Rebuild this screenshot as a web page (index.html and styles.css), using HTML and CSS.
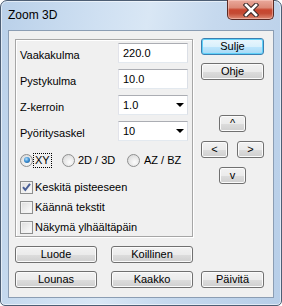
FILE: index.html
```html
<!DOCTYPE html>
<html>
<head>
<meta charset="utf-8">
<link rel="stylesheet" href="styles.css">
</head>
<body>
<div class="window">
  <div class="titlebar">
    <span class="title">Zoom 3D</span>
    <div class="close">
      <svg width="16" height="14" viewBox="0 0 16 14">
        <path d="M3 2 L13 12 M13 2 L3 12" stroke="#3b2a2a" stroke-width="4.6" stroke-linecap="square" fill="none"/>
        <path d="M3 2 L13 12 M13 2 L3 12" stroke="#ffffff" stroke-width="2.6" stroke-linecap="square" fill="none"/>
      </svg>
    </div>
  </div>
  <div class="client">
    <div class="top">
      <div class="group">
        <div class="fields">
          <span class="label">Vaakakulma</span>
          <div class="field">220.0</div>
          <span class="label">Pystykulma</span>
          <div class="field">10.0</div>
          <span class="label">Z-kerroin</span>
          <div class="field combo">1.0<span class="arrow"></span></div>
          <span class="label">Pyöritysaskel</span>
          <div class="field combo">10<span class="arrow"></span></div>
        </div>
        <div class="radios">
          <div class="radio-item r1"><span class="radio on"></span><span class="focus">XY</span></div>
          <div class="radio-item r2"><span class="radio"></span><span class="rtext">2D / 3D</span></div>
          <div class="radio-item r3"><span class="radio"></span><span class="rtext">AZ / BZ</span></div>
        </div>
        <div class="checks">
          <div class="check-item"><span class="check">
            <svg width="11" height="11" viewBox="0 0 11 11"><path d="M2 5.2 L4.3 8 L9 1.8" stroke="#4a5f96" stroke-width="2" fill="none"/></svg>
          </span><span>Keskitä pisteeseen</span></div>
          <div class="check-item"><span class="check"></span><span>Käännä tekstit</span></div>
          <div class="check-item"><span class="check"></span><span>Näkymä ylhäältäpäin</span></div>
        </div>
      </div>
      <div class="side">
        <div class="btn default">Sulje</div>
        <div class="btn ohje">Ohje</div>
        <div class="arrows">
          <div class="btn small up">^</div>
          <div class="lr">
            <div class="btn small">&lt;</div>
            <div class="btn small">&gt;</div>
          </div>
          <div class="btn small down">v</div>
        </div>
      </div>
    </div>
    <div class="btnrow first">
      <div class="btn wide">Luode</div>
      <div class="btn wide mid">Koillinen</div>
    </div>
    <div class="btnrow second">
      <div class="btn wide">Lounas</div>
      <div class="btn wide mid">Kaakko</div>
      <div class="btn narrow">Päivitä</div>
    </div>
  </div>
</div>
</body>
</html>
```
FILE: styles.css
```css
* { box-sizing: border-box; }
html, body { margin: 0; padding: 0; }
body {
  width: 282px;
  height: 306px;
  font-family: "Liberation Sans", Arial, sans-serif;
  font-size: 11px;
  color: #000;
  background: #ffffff;
  overflow: hidden;
}
.window {
  width: 282px;
  height: 306px;
  border: 1px solid #4d5e74;
  border-radius: 7px 7px 5px 5px;
  background: linear-gradient(100deg, #b9d0e9 0%, #cfe0f2 30%, #d9e7f5 45%, #c6d9ee 65%, #b7cee8 100%);
  box-shadow: inset 0 0 0 1px rgba(255,255,255,0.55);
  padding: 0 7px 7px 7px;
  display: flex;
  flex-direction: column;
}
.titlebar {
  height: 29px;
  position: relative;
  flex: none;
}
.title {
  font-size: 12px;
  line-height: 28px;
  color: #000;
}
.close {
  position: absolute;
  right: 0;
  top: -1px;
  width: 47px;
  height: 20px;
  border: 1px solid #5a2a24;
  border-top: none;
  border-radius: 0 0 5px 5px;
  background: linear-gradient(#eaa99c 0%, #dc8a78 40%, #c8462f 52%, #c44a33 70%, #dd8a74 100%);
  box-shadow: inset 0 0 0 1px rgba(255,220,210,0.45);
  display: flex;
  align-items: center;
  justify-content: center;
}
.client {
  flex: 1;
  background: #f0f0f0;
  border: 1px solid #8b9db3;
  padding: 8px 0 0 6px;
}
.top {
  display: flex;
  align-items: flex-start;
}
.group {
  width: 178px;
  height: 198px;
  border: 1px solid #a6a6a6;
  box-shadow: inset 1px 1px 0 #fff, 1px 1px 0 #fff;
  padding: 3px 4px 0 4px;
}
.fields {
  display: grid;
  grid-template-columns: 1fr 70px;
  grid-auto-rows: 20px;
  row-gap: 6px;
}
.label {
  align-self: end;
  line-height: 13px;
  padding-bottom: 1px;
}
.field {
  background: #fff;
  border: 1px solid;
  border-color: #abadb3 #dbdfe6 #e3e9ef #e2e3ea;
  padding-left: 4px;
  display: flex;
  align-items: center;
  position: relative;
}
.combo { border-color: #abadb3 #dbdfe6 #e3e9ef #e2e3ea; }
.arrow {
  position: absolute;
  right: 3px;
  top: 7px;
  width: 0;
  height: 0;
  border-left: 4px solid transparent;
  border-right: 4px solid transparent;
  border-top: 4px solid #000;
}
.radios {
  margin-top: 11px;
  height: 16px;
  display: flex;
  align-items: center;
}
.radio-item {
  display: flex;
  align-items: center;
}
.r1 { width: 42px; }
.r2 { width: 65px; }
.radio {
  width: 13px;
  height: 13px;
  border-radius: 50%;
  border: 1px solid #8e8f8f;
  background: radial-gradient(circle at 60% 65%, #fcfcfc 0%, #e6e6e6 55%, #d2d2d2 100%);
  flex: none;
  position: relative;
}
.radio.on::after {
  content: "";
  position: absolute;
  left: 2.5px;
  top: 2.5px;
  width: 6px;
  height: 6px;
  border-radius: 50%;
  background: radial-gradient(circle at 40% 35%, #b9e2fb 0%, #3f93d6 45%, #164d86 100%);
}
.focus {
  border: 1px dotted #000;
  padding: 0 1px;
  line-height: 13px;
}
.rtext { margin-left: 3px; }
.r3 .rtext { margin-left: 4px; }
.checks {
  margin-top: 9px;
}
.check-item {
  height: 20px;
  display: flex;
  align-items: center;
}
.check {
  width: 13px;
  height: 13px;
  border: 1px solid #8e8f8f;
  background: linear-gradient(135deg, #dcdcdc 0%, #f4f4f4 70%, #fafafa 100%);
  box-shadow: inset 0 0 0 1px #f2f2f2;
  margin-right: 2px;
  flex: none;
  display: flex;
  align-items: center;
  justify-content: center;
}
.side {
  width: 63px;
  margin-left: 8px;
  margin-top: -1px;
  display: flex;
  flex-direction: column;
}
.btn {
  height: 17px;
  border: 1px solid #707070;
  border-radius: 3px;
  background: linear-gradient(#f2f2f2 0%, #ebebeb 50%, #dddddd 51%, #cfcfcf 100%);
  box-shadow: inset 0 0 0 1px #fbfbfb;
  text-align: center;
  line-height: 15px;
  white-space: nowrap;
}
.btn.default {
  border-color: #3c7fb1;
  background: linear-gradient(#eaf6fd 0%, #d9f0fc 50%, #bee6fd 51%, #a7d9f5 100%);
  box-shadow: inset 0 0 0 1px #5fd1f9;
}
.ohje { margin-top: 8px; }
.arrows {
  margin-top: 35px;
  display: flex;
  flex-direction: column;
  align-items: center;
}
.btn.small { width: 27px; }
.lr {
  width: 63px;
  display: flex;
  justify-content: space-between;
  margin: 9px 0;
}
.btnrow {
  display: flex;
}
.btnrow.first { margin-top: 9px; }
.btnrow.second { margin-top: 8px; }
.btn.wide { width: 82px; }
.btn.mid { margin-left: 14px; }
.btn.narrow { width: 63px; margin-left: 8px; }
```
